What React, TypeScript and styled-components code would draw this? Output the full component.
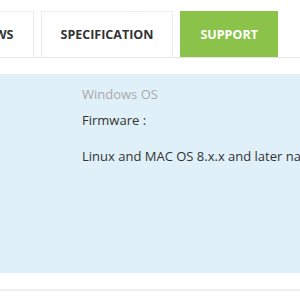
import styled, { createGlobalStyle } from "styled-components";

const GlobalStyle = createGlobalStyle`
   html, body {
      margin: 0;
      padding: 0;
      background: #fff;
      overflow: hidden;
   }
   body {
      font-family: "Open Sans", "Liberation Sans", sans-serif;
   }
`;

const Page = styled.div`
   width: 300px;
   height: 300px;
   overflow: hidden;
   display: flex;
   flex-direction: column;
`;

const TabBar = styled.div`
   display: flex;
   gap: 7px;
   padding-top: 11px;
   margin-left: -60px;
   border-bottom: 1px solid #e6e6e6;
   width: 500px;
`;

const Tab = styled.div<{ $active?: boolean }>`
   height: 46px;
   padding: 0 19px;
   display: flex;
   align-items: center;
   justify-content: center;
   box-sizing: border-box;
   font-size: 12.5px;
   font-weight: 700;
   text-transform: uppercase;
   white-space: nowrap;
   color: ${(p) => (p.$active ? "#fff" : "#333")};
   background: ${(p) => (p.$active ? "#8bc34a" : "#fff")};
   border: 1px solid ${(p) => (p.$active ? "#8bc34a" : "#ececec")};
   border-bottom: none;
`;

const Panel = styled.div`
   margin-top: 16px;
   height: 199px;
   background: #dff0f8;
   padding: 10px 0 0 82px;
   box-sizing: border-box;
   font-size: 13px;
   white-space: nowrap;
   overflow: hidden;
`;

const Line = styled.p<{ $muted?: boolean; $gap?: number }>`
   margin: 0 0 ${(p) => p.$gap ?? 6}px;
   line-height: 20px;
   color: ${(p) => (p.$muted ? "#a9a9a9" : "#333")};
`;

const Footer = styled.div`
   height: 16px;
   border-bottom: 2px solid #efefef;
`;

export default function App() {
   return (
      <Page>
         <GlobalStyle />
         <TabBar>
            <Tab>Reviews</Tab>
            <Tab>Specification</Tab>
            <Tab $active>Support</Tab>
         </TabBar>
         <Panel>
            <Line $muted>Windows OS</Line>
            <Line $gap={16}>Firmware :</Line>
            <Line>Linux and MAC OS 8.x.x and later native support</Line>
         </Panel>
         <Footer />
      </Page>
   );
}
